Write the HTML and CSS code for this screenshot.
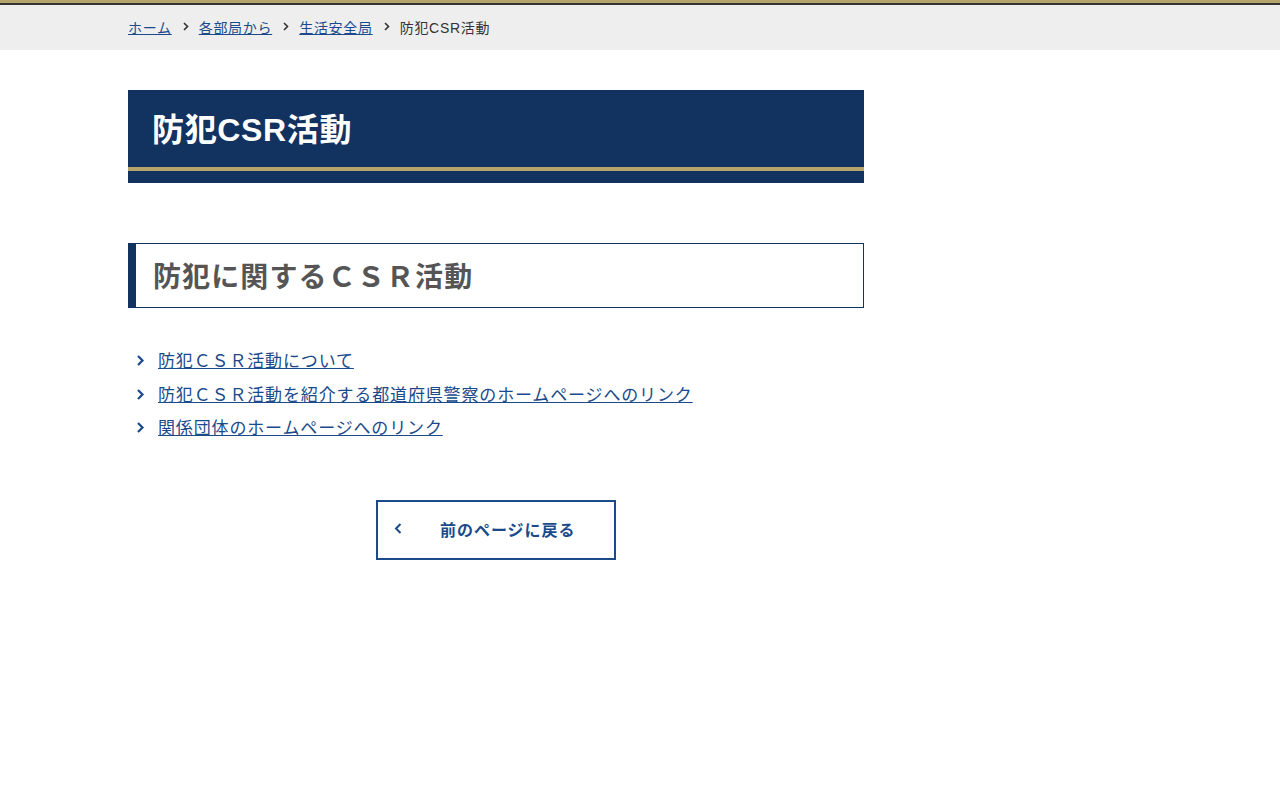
FILE: index.html
```html
<!DOCTYPE html>
<html lang="ja">
<head>
<meta charset="utf-8">
<title>防犯CSR活動</title>
<link rel="stylesheet" href="styles.css">
</head>
<body>
<div class="topline"></div>
<nav class="breadcrumb">
  <ol class="container crumbs">
    <li><a href="#">ホーム</a></li>
    <li class="sep"><svg width="6" height="9" viewBox="0 0 6 9"><path d="M1 1l3.5 3.5L1 8" fill="none" stroke="#333" stroke-width="1.6"/></svg></li>
    <li><a href="#">各部局から</a></li>
    <li class="sep"><svg width="6" height="9" viewBox="0 0 6 9"><path d="M1 1l3.5 3.5L1 8" fill="none" stroke="#333" stroke-width="1.6"/></svg></li>
    <li><a href="#">生活安全局</a></li>
    <li class="sep"><svg width="6" height="9" viewBox="0 0 6 9"><path d="M1 1l3.5 3.5L1 8" fill="none" stroke="#333" stroke-width="1.6"/></svg></li>
    <li class="current">防犯CSR活動</li>
  </ol>
</nav>
<div class="container">
  <main class="main">
    <div class="page-title"><h1>防犯CSR活動</h1></div>
    <h2 class="section-title">防犯に関するＣＳＲ活動</h2>
    <ul class="links">
      <li><svg class="chev" width="9" height="13" viewBox="0 0 9 13"><path d="M2 2l4.5 4.5L2 11" fill="none" stroke="#1a4a8c" stroke-width="2.2"/></svg><a href="#">防犯ＣＳＲ活動について</a></li>
      <li><svg class="chev" width="9" height="13" viewBox="0 0 9 13"><path d="M2 2l4.5 4.5L2 11" fill="none" stroke="#1a4a8c" stroke-width="2.2"/></svg><a href="#">防犯ＣＳＲ活動を紹介する都道府県警察のホームページへのリンク</a></li>
      <li><svg class="chev" width="9" height="13" viewBox="0 0 9 13"><path d="M2 2l4.5 4.5L2 11" fill="none" stroke="#1a4a8c" stroke-width="2.2"/></svg><a href="#">関係団体のホームページへのリンク</a></li>
    </ul>
    <div class="back-wrap">
      <a class="back" href="#"><svg class="back-chev" width="9" height="13" viewBox="0 0 9 13"><path d="M6.5 2L2 6.5 6.5 11" fill="none" stroke="#1a4a8c" stroke-width="2"/></svg><span>前のページに戻る</span></a>
    </div>
  </main>
</div>
</body>
</html>
```
FILE: styles.css
```css
* { box-sizing: border-box; }
html, body { margin: 0; padding: 0; }
body {
  font-family: Arial, "Liberation Sans", "Noto Sans CJK JP", sans-serif;
  color: #333;
  background: #fff;
}
.topline {
  height: 5px;
  background: #333;
  border-top: 3px solid #b5a46b;
}
.container {
  width: 1024px;
  margin: 0 auto;
}
.breadcrumb {
  background: #eeeeee;
  height: 45px;
}
.crumbs {
  list-style: none;
  margin: 0 auto;
  padding: 0 0 2px;
  height: 45px;
  display: flex;
  align-items: center;
  font-size: 14px;
  letter-spacing: 0.05em;
}
.crumbs a { color: #1a4a8c; }
.crumbs .sep { display: flex; align-items: center; padding: 0 10px 0 11px; }
.crumbs .current { color: #333; }
.main {
  width: 736px;
  padding-top: 40px;
  padding-bottom: 60px;
}
.page-title {
  background: #12325f;
  padding-bottom: 12px;
}
.page-title h1 {
  margin: 0;
  height: 81px;
  padding: 0 0 4px 24px;
  border-bottom: 4px solid #b5a46b;
  display: flex;
  align-items: center;
  color: #fff;
  font-size: 32px;
  font-weight: bold;
  letter-spacing: 0.02em;
}
.section-title {
  margin: 60px 0 0;
  height: 65px;
  border: 1px solid #12325f;
  border-left: 8px solid #12325f;
  padding: 0 0 2px 17px;
  display: flex;
  align-items: center;
  font-size: 28px;
  font-weight: bold;
  letter-spacing: 0.04em;
  color: #555;
}
.links {
  list-style: none;
  margin: 35px 0 0;
  padding: 0 0 0 8px;
}
.links li {
  display: flex;
  align-items: center;
  height: 33.5px;
  font-size: 17px;
  letter-spacing: 0.05em;
}
.links .chev { margin: 2px 13px 0 0; flex: none; }
.links a { color: #1a4a8c; }
.back-wrap {
  display: flex;
  justify-content: center;
  margin-top: 56px;
}
.back {
  width: 240px;
  height: 60px;
  border: 2px solid #1a4a8c;
  display: flex;
  align-items: center;
  padding: 0 0 2px 16px;
  color: #1a4a8c;
  text-decoration: none;
  font-size: 16px;
  font-weight: bold;
  letter-spacing: 0.06em;
}
.back-chev { flex: none; }
.back span { margin-left: 37px; }
```
